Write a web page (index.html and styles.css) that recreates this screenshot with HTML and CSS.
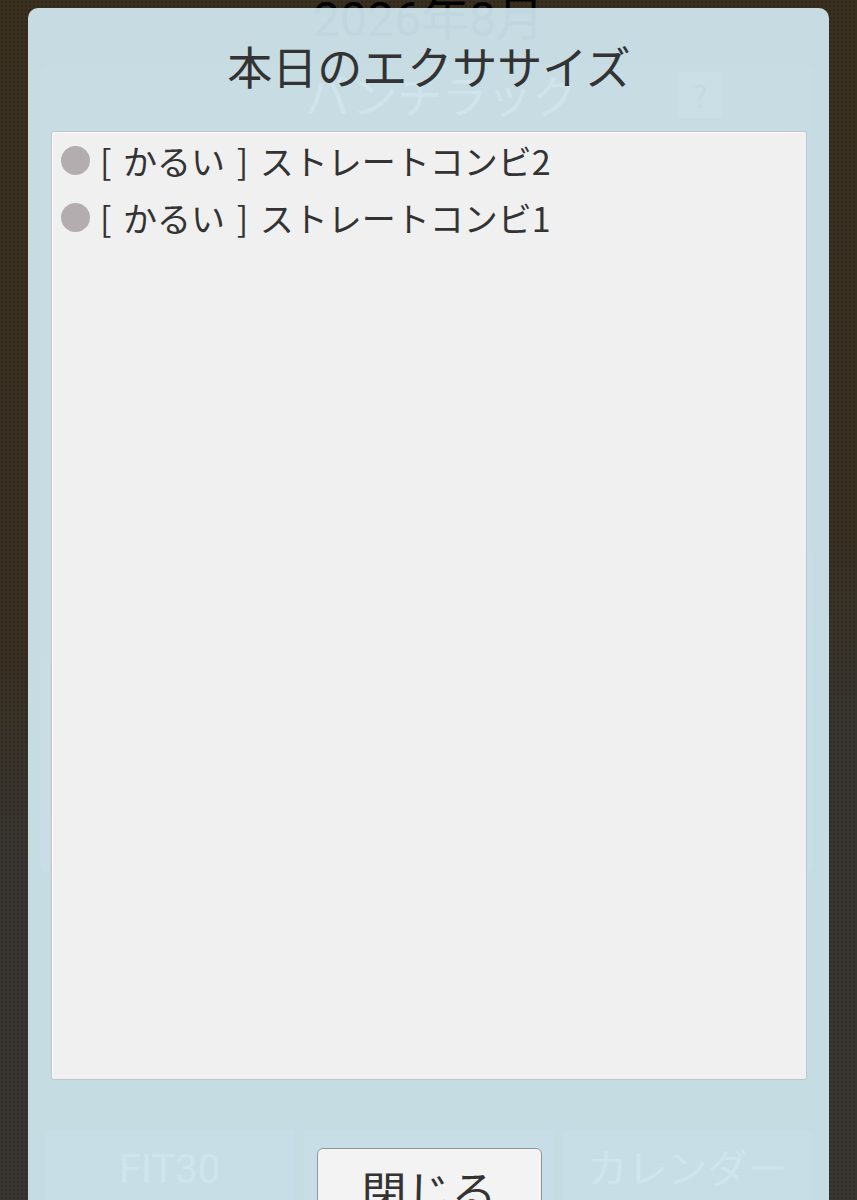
FILE: index.html
```html
<!DOCTYPE html>
<html lang="ja">
<head>
<meta charset="utf-8">
<title>本日のエクササイズ</title>
<link rel="stylesheet" href="styles.css">
</head>
<body>
  <div class="app">
    <h1 class="month">2026年8月</h1>
    <section class="card">
      <div class="card-head">
        <span class="card-title">パンチラック</span>
        <span class="help">?</span>
      </div>
    </section>
    <nav class="tabs">
      <div class="tab">FIT30</div>
      <div class="tab"></div>
      <div class="tab">カレンダー</div>
    </nav>
  </div>

  <div class="overlay">
    <div class="dialog">
      <h2 class="dialog-title">本日のエクササイズ</h2>
      <ul class="list">
        <li class="item"><span class="dot"></span><span class="label">[ かるい ] ストレートコンビ2</span></li>
        <li class="item"><span class="dot"></span><span class="label">[ かるい ] ストレートコンビ1</span></li>
      </ul>
      <div class="actions">
        <button class="close" type="button">閉じる</button>
      </div>
    </div>
  </div>
</body>
</html>
```

FILE: styles.css
```css
html, body {
  margin: 0;
  padding: 0;
}

body {
  width: 857px;
  height: 1200px;
  overflow: hidden;
  position: relative;
  font-family: "Noto Sans CJK JP", "Noto Sans", sans-serif;
  background-color: #383530;
  background-image:
    radial-gradient(circle, rgba(0, 0, 0, 0.18) 0.8px, transparent 1.4px),
    linear-gradient(172deg, #3a3020 0%, #393022 50%, #383530 64%, #393631 100%);
  background-size: 4px 4px, 100% 100%;
}

/* underlying app page (seen faintly through the dialog) */
.app {
  display: flex;
  flex-direction: column;
  height: 1200px;
}

.month {
  margin: -6px 0 0;
  font-size: 48px;
  line-height: 52px;
  font-weight: 400;
  text-align: center;
  color: #000;
  font-family: "Roboto", "Noto Sans CJK JP", sans-serif;
}

.card {
  margin: 18px 44px 0 40px;
  height: 810px;
  border-radius: 10px;
  background: rgba(255, 255, 255, 0.07);
  box-sizing: border-box;
  padding: 4px 90px 0 0;
}

.card-head {
  display: flex;
  align-items: center;
  justify-content: flex-end;
  gap: 100px;
}

.card-title {
  font-size: 45px;
  line-height: 54px;
  color: rgba(255, 255, 255, 0.4);
}

.help {
  width: 46px;
  height: 46px;
  background: rgba(255, 255, 255, 0.12);
  color: #1e1e1e;
  font-size: 30px;
  line-height: 46px;
  text-align: center;
}

.tabs {
  margin-top: auto;
  margin-bottom: -10px;
  display: flex;
  gap: 10px;
  padding: 0 45px;
}

.tab {
  flex: 1;
  height: 80px;
  background: rgba(255, 255, 255, 0.1);
  color: rgba(255, 255, 255, 0.35);
  font-size: 40px;
  line-height: 80px;
  text-align: center;
  font-family: "Roboto", "Noto Sans CJK JP", sans-serif;
}

/* dialog */
.overlay {
  position: absolute;
  inset: 0;
}

.dialog {
  position: absolute;
  top: 8px;
  left: 28px;
  width: 801px;
  height: 1240px;
  box-sizing: border-box;
  padding: 31px 22px 0 23px;
  border-radius: 10px;
  background: rgba(214, 238, 247, 0.9);
}

.dialog-title {
  margin: 0 0 38px;
  font-size: 45px;
  line-height: 54px;
  font-weight: 400;
  text-align: center;
  color: #333;
}

.list {
  margin: 0;
  padding: 0;
  list-style: none;
  height: 949px;
  box-sizing: border-box;
  background: #f0f0f0;
  border: 1px solid #bcc7cc;
  border-radius: 3px;
  box-shadow: inset 1px 1px 0 #ffffff;
}

.item {
  display: flex;
  align-items: center;
  gap: 10px;
  height: 57px;
  padding-left: 9px;
}

.dot {
  flex: none;
  width: 29px;
  height: 29px;
  border-radius: 50%;
  background: #b4adaf;
}

.label {
  font-size: 34px;
  line-height: 57px;
  word-spacing: 4px;
  color: #333;
}

.actions {
  display: flex;
  justify-content: center;
  margin-top: 68px;
}

.close {
  width: 225px;
  padding: 10px 0;
  font-family: inherit;
  font-size: 45px;
  line-height: 64px;
  color: #333;
  background: #f3f3f3;
  border: 1px solid #8e989c;
  border-radius: 6px;
}
```
